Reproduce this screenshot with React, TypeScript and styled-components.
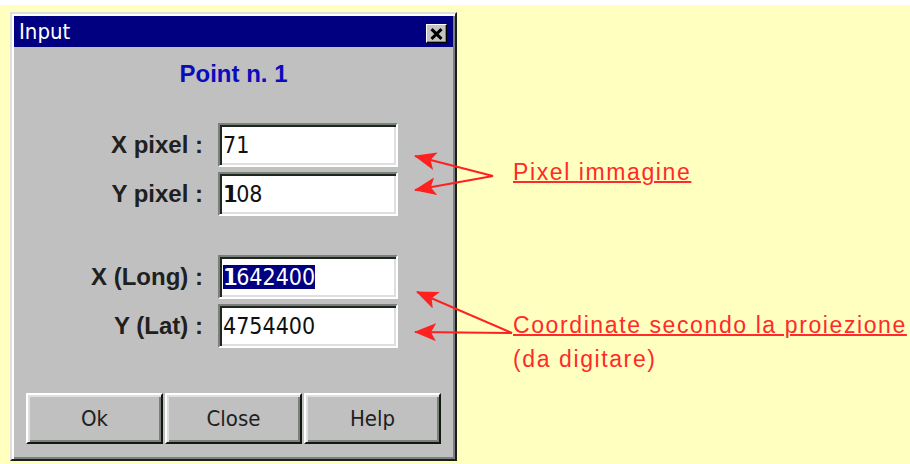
import React from "react";
import styled, { createGlobalStyle } from "styled-components";

const Global = createGlobalStyle`
  html, body { margin: 0; padding: 0; background: #ffffc0; }
  body { font-family: "Liberation Sans", Arial, sans-serif; }
`;

// Condensed face for the classic dialog text (fields, buttons, caption)
const narrow = `"DejaVu Sans Condensed", "Liberation Sans", sans-serif`;

const Page = styled.div`
  position: relative;
  box-sizing: border-box;
  width: 910px;
  height: 464px;
  padding: 12px 0 0 10px;
  display: flex;
  align-items: flex-start;
  background: #ffffc0;
  box-shadow: inset 0 5px #ffffff;
  overflow: hidden;
`;

const Dialog = styled.div`
  flex: none;
  box-sizing: border-box;
  width: 447px;
  height: 449px;
  padding: 2px;
  display: flex;
  flex-direction: column;
  background: #c0c0c0;
  border: 2px solid;
  border-color: #dfdfdf #1a201a #1a201a #dfdfdf;
  box-shadow: inset 2px 2px #ffffff, inset -2px -2px #7c807c;
`;

const TitleBar = styled.div`
  height: 31px;
  flex: none;
  display: flex;
  align-items: flex-start;
  justify-content: space-between;
  padding: 0 6px 0 5px;
  background: #000080;
`;

const Title = styled.span`
  font-family: ${narrow};
  font-size: 22px;
  line-height: 31px;
  color: #ffffff;
`;

const CloseBox = styled.div`
  box-sizing: border-box;
  width: 21px;
  height: 19px;
  margin-top: 8px;
  display: flex;
  align-items: center;
  justify-content: center;
  background: #c4c4c4;
  border: 1px solid;
  border-color: #ffffff #000000 #000000 #ffffff;
  box-shadow: inset -1px -1px #808080;
`;

const Heading = styled.div`
  margin-top: 13px;
  text-align: center;
  font-size: 24px;
  line-height: 28px;
  font-weight: bold;
  color: #0c0cbc;
`;

const FieldGroup = styled.div<{ $gap: number }>`
  display: grid;
  grid-template-columns: 189px 180px;
  grid-auto-rows: 44px;
  column-gap: 15px;
  row-gap: 5px;
  margin-top: ${(p) => p.$gap}px;
`;

const Label = styled.div`
  align-self: center;
  text-align: right;
  font-size: 24px;
  font-weight: bold;
  color: #202020;
  white-space: nowrap;
`;

const Field = styled.div`
  box-sizing: border-box;
  display: flex;
  align-items: center;
  padding-left: 3px;
  background: #ffffff;
  border: 2px solid;
  border-color: #7c807c #ffffff #ffffff #7c807c;
  box-shadow: inset 2px 2px #1e261e, inset -2px -2px #dfdfdf;
  font-family: ${narrow};
  font-size: 23px;
  color: #101010;
`;

const Selection = styled.span`
  background: #000080;
  color: #ffffff;
  line-height: 24px;
`;

const CaretChar = styled.span`
  text-shadow: 1px 0 currentColor, 2px 0 currentColor;
`;

const ButtonRow = styled.div`
  display: flex;
  gap: 2px;
  margin-top: 45px;
  padding-left: 12px;
`;

const Button = styled.div`
  box-sizing: border-box;
  width: 137px;
  height: 51px;
  display: flex;
  align-items: center;
  justify-content: center;
  background: #c0c0c0;
  border: 2px solid;
  border-color: #ffffff #101810 #101810 #ffffff;
  box-shadow: inset 2px 2px #dfdfdf, inset -2px -2px #7c807c;
  font-family: ${narrow};
  font-size: 22px;
  color: #202020;
`;

const Notes = styled.div`
  display: flex;
  flex-direction: column;
  padding-left: 56px;
`;

const Note = styled.div<{ $top: number }>`
  margin-top: ${(p) => p.$top}px;
  font-family: "Liberation Sans", Arial, sans-serif;
  font-size: 23px;
  line-height: 34px;
  letter-spacing: 1.6px;
  color: #ff2a2a;
  white-space: nowrap;
`;

const Underlined = styled.span`
  text-decoration: underline;
  text-decoration-thickness: 2px;
  text-underline-offset: 1px;
`;

const ArrowLayer = styled.svg`
  position: absolute;
  left: 0;
  top: 0;
  width: 910px;
  height: 464px;
  pointer-events: none;
`;

// Callout arrows from the red notes to the fields they describe
function Arrows() {
  const red = "#ff2020";
  return (
    <ArrowLayer viewBox="0 0 910 464">
      <defs>
        <marker
          id="head"
          viewBox="0 0 22 18"
          refX="21"
          refY="9"
          markerWidth="22"
          markerHeight="18"
          markerUnits="userSpaceOnUse"
          orient="auto"
        >
          <path d="M22 9 L0 0 L5 9 L0 18 Z" fill={red} />
        </marker>
      </defs>
      <g stroke={red} strokeWidth="2" fill="none">
        <line x1="493" y1="176" x2="415" y2="156" markerEnd="url(#head)" />
        <line x1="493" y1="176" x2="415" y2="190" markerEnd="url(#head)" />
        <line x1="512" y1="333" x2="417" y2="292" markerEnd="url(#head)" />
        <line x1="512" y1="333" x2="415" y2="332" markerEnd="url(#head)" />
      </g>
    </ArrowLayer>
  );
}

export default function App() {
  return (
    <>
      <Global />
      <Page>
        <Dialog>
          <TitleBar>
            <Title>Input</Title>
            <CloseBox>
              <svg width="13" height="12" viewBox="0 0 13 12">
                <path d="M1.5 1.2 L11.5 10.8 M11.5 1.2 L1.5 10.8" stroke="#000" strokeWidth="3" />
              </svg>
            </CloseBox>
          </TitleBar>
          <Heading>Point n. 1</Heading>
          <FieldGroup $gap={35}>
            <Label>X pixel :</Label>
            <Field>71</Field>
            <Label>Y pixel :</Label>
            <Field>
              <CaretChar>1</CaretChar>08
            </Field>
          </FieldGroup>
          <FieldGroup $gap={39}>
            <Label>X (Long) :</Label>
            <Field>
              <Selection>
                <CaretChar>1</CaretChar>642400
              </Selection>
            </Field>
            <Label>Y (Lat) :</Label>
            <Field>4754400</Field>
          </FieldGroup>
          <ButtonRow>
            <Button>Ok</Button>
            <Button>Close</Button>
            <Button>Help</Button>
          </ButtonRow>
        </Dialog>
        <Notes>
          <Note $top={143}>
            <Underlined>Pixel immagine</Underlined>
          </Note>
          <Note $top={119}>
            <Underlined>Coordinate secondo la proiezione</Underlined>
            <br />
            (da digitare)
          </Note>
        </Notes>
        <Arrows />
      </Page>
    </>
  );
}
